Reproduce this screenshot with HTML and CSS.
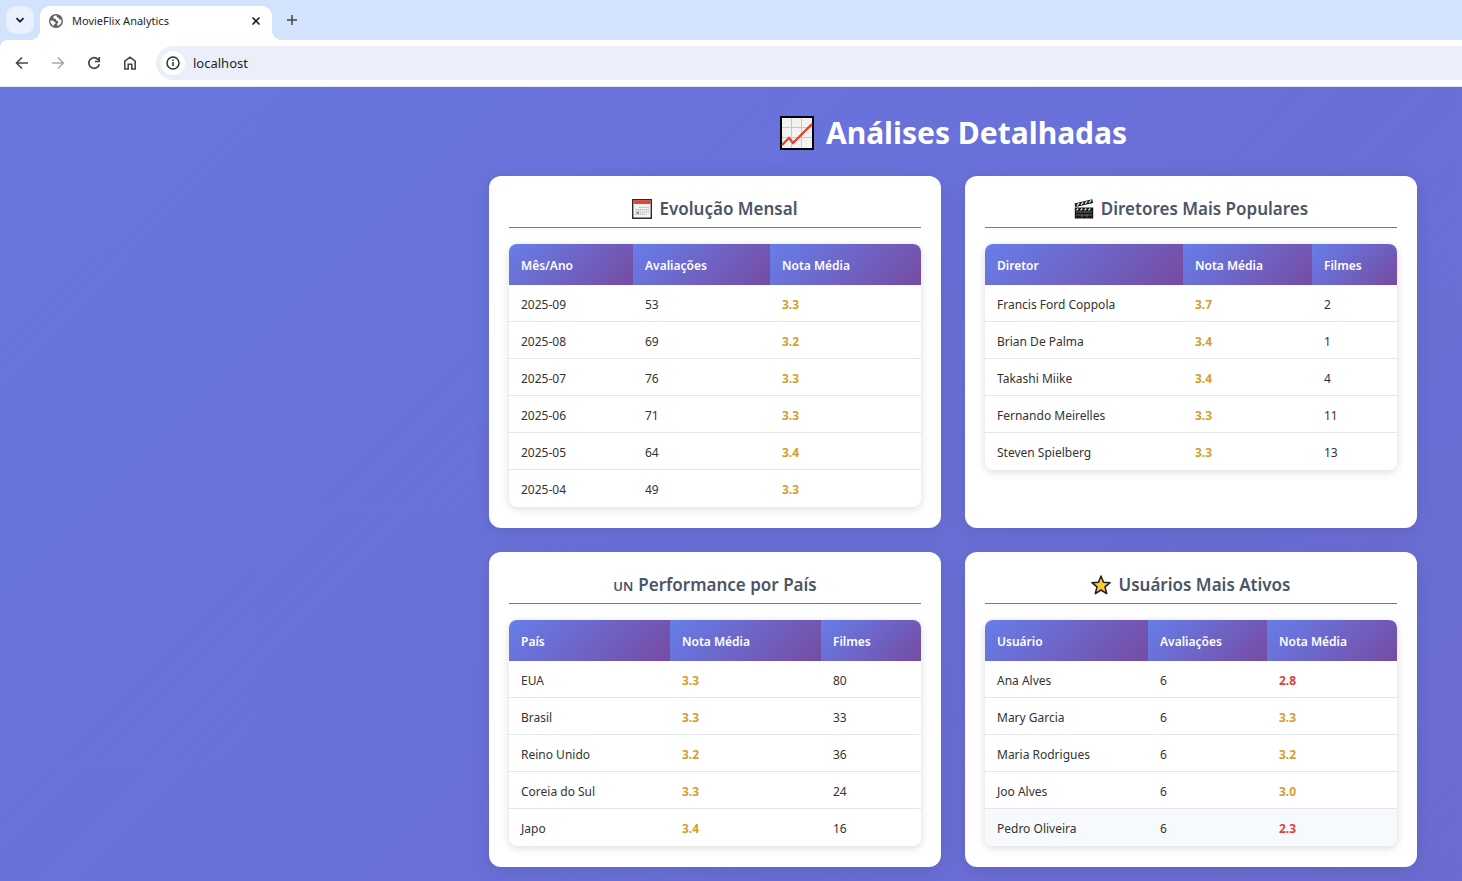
FILE: index.html
```html
<!DOCTYPE html>
<html lang="pt-BR">
<head>
<meta charset="utf-8">
<title>MovieFlix Analytics</title>
<link rel="stylesheet" href="styles.css">
</head>
<body>
<header class="browser">
  <div class="tabstrip">
    <button class="tab-search" aria-label="Pesquisar guias">
      <svg width="10" height="10" viewBox="0 0 10 10"><path d="M1.5 3.2 5 6.7 8.500 3.200" fill="none" stroke="#1f1f1f" stroke-width="1.7"/></svg>
    </button>
    <div class="tab">
      <svg width="16" height="16" viewBox="0 0 16 16"><circle cx="8" cy="8" r="7" fill="#5f6368"/><path d="M8.600 2.600C7 2.400 5.500 3 5.300 4.200c-.2 1.200.8 1.500 1.800 1.500.9.100 1.200.7.900 1.300-.3.500.3 1 1.200.9 1-.1 1.300.4 1.200 1.200-.2.900-1 1-1.100 1.900l-.1 1.900C11.700 12.600 13.500 10.500 13.500 8c0-.7-.1-1.200-.3-1.700-1.100.7-2.200.2-2.300-.8-.1-.9-1.100-.8-1.700-1.300-.5-.4-.8-1-.6-1.600z" fill="#fff"/><path d="M2.300 7.600c1.300-.2 2.800 0 3.800 1 .9.800 1.600.700 1.500 1.600-.1.700-1.400.9-1.700 1.600-.1.400-.1.700 0 1.100C3.700 12.200 2.200 10 2.300 7.600z" fill="#fff"/></svg>
      <span class="tab-title">MovieFlix Analytics</span>
      <button class="tab-close" aria-label="Fechar"><svg width="10" height="10" viewBox="0 0 10 10"><path d="M1.500 1.500l7 7M8.500 1.500l-7 7" stroke="#1f1f1f" stroke-width="1.600"/></svg></button>
    </div>
    <button class="tab-new" aria-label="Nova guia"><svg width="12" height="12" viewBox="0 0 12 12"><path d="M6 1v10M1 6h10" stroke="#474747" stroke-width="1.500"/></svg></button>
  </div>
  <nav class="toolbar">
    <button class="nav" aria-label="Voltar"><svg width="16" height="16" viewBox="0 0 16 16"><path d="M14 8H3M8 2.500 2.500 8 8 13.500" fill="none" stroke="#474747" stroke-width="1.600"/></svg></button>
    <button class="nav" aria-label="Avançar"><svg width="16" height="16" viewBox="0 0 16 16"><path d="M2 8h11M8 2.500 13.500 8 8 13.500" fill="none" stroke="#a9a9a9" stroke-width="1.500"/></svg></button>
    <button class="nav" aria-label="Recarregar"><svg width="16" height="16" viewBox="0 0 16 16"><path d="M13.300 9.200A5.300 5.300 0 1 1 12.200 4.600L13.300 6" fill="none" stroke="#474747" stroke-width="1.700"/><path d="M13.300 2v4.500H8.800" fill="none" stroke="#474747" stroke-width="1.600"/></svg></button>
    <button class="nav" aria-label="Início"><svg width="16" height="16" viewBox="0 0 16 16"><path d="M2.800 6.200 8 2.200l5.200 4V14H9.800V9.200H6.200V14H2.800z" fill="none" stroke="#474747" stroke-width="1.600"/></svg></button>
    <div class="omnibox">
      <button class="info" aria-label="Informações do site"><svg width="16" height="16" viewBox="0 0 16 16"><circle cx="8" cy="8" r="6" fill="none" stroke="#303134" stroke-width="1.500"/><path d="M8 7v4M8 4.600v1.500" stroke="#303134" stroke-width="1.500"/></svg></button>
      <input class="url" type="text" value="localhost" aria-label="Endereço">
    </div>
  </nav>
</header>
<main class="page">
  <div class="content">
    <h1 class="heading">
      <svg class="heading-icon" viewBox="0 0 36 36"><path d="M2 2h32v32H2z" fill="#f2f2f2" stroke="#000" stroke-width="2"/><path d="M12.500 3v30M22.500 3v30M3 12.500h30M3 22.500h30" stroke="#c6c6cc" stroke-width="1"/><path d="M3 30l7-7 4 5L33 9" fill="none" stroke="#e8402a" stroke-width="2.400"/></svg>
      <span>Análises Detalhadas</span>
    </h1>
    <div class="cards">
      <section class="card">
        <h2 class="card-title"><svg class="icon" viewBox="0 0 20 20"><path d="M.7.7h18.600v18.600H.7z" fill="#f4f4f4" stroke="#2b2b2b" stroke-width="1.400"/><path d="M1.400 1.400h17.200V5H1.400z" fill="#e8402a"/><path d="M7 8.500h10M3.500 10.700H17M3.500 13H17M3.500 15.200h11" stroke="#aaa" stroke-width="1.200" stroke-dasharray="1.300 .8"/><path d="M4.500 12.500l2.500 2.500m0-2.500l-2.500 2.500" stroke="#df5146"/></svg><span>Evolução Mensal</span></h2>
        <table class="grid">
          <colgroup><col class="w-124"><col class="w-137"><col></colgroup>
          <thead><tr><th>Mês/Ano</th><th>Avaliações</th><th>Nota Média</th></tr></thead>
          <tbody>
            <tr><td>2025-09</td><td>53</td><td class="mid">3.3</td></tr>
            <tr><td>2025-08</td><td>69</td><td class="mid">3.2</td></tr>
            <tr><td>2025-07</td><td>76</td><td class="mid">3.3</td></tr>
            <tr><td>2025-06</td><td>71</td><td class="mid">3.3</td></tr>
            <tr><td>2025-05</td><td>64</td><td class="mid">3.4</td></tr>
            <tr><td>2025-04</td><td>49</td><td class="mid">3.3</td></tr>
          </tbody>
        </table>
      </section>
      <section class="card">
        <h2 class="card-title"><svg class="icon" viewBox="0 0 20 20"><path d="M.8 8.500h18.400v11H.8z" fill="#161616"/><path d="M.5 4.500 18.300.3l.8 3.600L1.300 8z" fill="#161616"/><path d="M3 6.500l2.200-2.300M7 5.600l2.200-2.300M11 4.600l2.200-2.300M15 3.700l2.200-2.300" stroke="#fff" stroke-width="1.200"/><path d="M2.500 11.300l1.800-1.800M6.500 11.300l1.800-1.800M10.500 11.300l1.800-1.800M14.500 11.300l1.800-1.800" stroke="#fff" stroke-width="1.100"/><path d="M2 13h16M2 16h16M8 16v2.500M13 16v2.500" stroke="#8f8f8f" stroke-width=".7"/></svg><span>Diretores Mais Populares</span></h2>
        <table class="grid">
          <colgroup><col class="w-198"><col class="w-129"><col></colgroup>
          <thead><tr><th>Diretor</th><th>Nota Média</th><th>Filmes</th></tr></thead>
          <tbody>
            <tr><td>Francis Ford Coppola</td><td class="mid">3.7</td><td>2</td></tr>
            <tr><td>Brian De Palma</td><td class="mid">3.4</td><td>1</td></tr>
            <tr><td>Takashi Miike</td><td class="mid">3.4</td><td>4</td></tr>
            <tr><td>Fernando Meirelles</td><td class="mid">3.3</td><td>11</td></tr>
            <tr><td>Steven Spielberg</td><td class="mid">3.3</td><td>13</td></tr>
          </tbody>
        </table>
      </section>
      <section class="card">
        <h2 class="card-title un-title"><span class="un">UN</span><span>Performance por País</span></h2>
        <table class="grid">
          <colgroup><col class="w-161"><col class="w-151"><col></colgroup>
          <thead><tr><th>País</th><th>Nota Média</th><th>Filmes</th></tr></thead>
          <tbody>
            <tr><td>EUA</td><td class="mid">3.3</td><td>80</td></tr>
            <tr><td>Brasil</td><td class="mid">3.3</td><td>33</td></tr>
            <tr><td>Reino Unido</td><td class="mid">3.2</td><td>36</td></tr>
            <tr><td>Coreia do Sul</td><td class="mid">3.3</td><td>24</td></tr>
            <tr><td>Japo</td><td class="mid">3.4</td><td>16</td></tr>
          </tbody>
        </table>
      </section>
      <section class="card">
        <h2 class="card-title"><svg class="icon" viewBox="0 0 20 20"><path d="M10 1l2.500 6.200 6.600.5-5.100 4.200 1.700 6.700L10 15l-5.700 3.600L6 11.900.9 7.700l6.600-.5z" fill="#ffc83d" stroke="#1c1c1c" stroke-width="1.500" stroke-linejoin="round"/></svg><span>Usuários Mais Ativos</span></h2>
        <table class="grid">
          <colgroup><col class="w-163"><col class="w-119"><col></colgroup>
          <thead><tr><th>Usuário</th><th>Avaliações</th><th>Nota Média</th></tr></thead>
          <tbody>
            <tr><td>Ana Alves</td><td>6</td><td class="low">2.8</td></tr>
            <tr><td>Mary Garcia</td><td>6</td><td class="mid">3.3</td></tr>
            <tr><td>Maria Rodrigues</td><td>6</td><td class="mid">3.2</td></tr>
            <tr><td>Joo Alves</td><td>6</td><td class="mid">3.0</td></tr>
            <tr class="active"><td>Pedro Oliveira</td><td>6</td><td class="low">2.3</td></tr>
          </tbody>
        </table>
      </section>
    </div>
  </div>
</main>
</body>
</html>
```
FILE: styles.css
```css
* { box-sizing: border-box; }
html, body { margin: 0; }
body {
  display: flex;
  flex-direction: column;
  min-height: 100vh;
  font-family: "Noto Sans", "Open Sans", sans-serif;
  overflow: hidden;
}
button { border: 0; padding: 0; background: none; display: flex; align-items: center; justify-content: center; }
svg { display: block; flex: none; }

.browser { background: #d3e3fd; }
.tabstrip { display: flex; height: 40px; padding: 6px 0 0 6px; }
.tab-search { width: 28px; height: 28px; border-radius: 10px; background: #e9f0fe; }
.tab {
  position: relative;
  display: flex;
  align-items: center;
  gap: 8px;
  width: 232px;
  margin-left: 6px;
  padding: 0 8px 5px;
  border-radius: 10px 10px 0 0;
  background: #fff;
}
.tab::before, .tab::after {
  content: "";
  position: absolute;
  bottom: 0;
  width: 10px;
  height: 10px;
}
.tab::before { left: -10px; background: radial-gradient(circle at 0 0, transparent 10px, #fff 10px); }
.tab::after { right: -10px; background: radial-gradient(circle at 100% 0, transparent 10px, #fff 10px); }
.tab-title { flex: 1; font-size: 11px; color: #1f1f1f; }
.tab-close { width: 16px; height: 16px; }
.tab-new { width: 28px; height: 28px; margin-left: 6px; }
.toolbar {
  display: flex;
  align-items: center;
  height: 47px;
  padding-left: 8px;
  background: #fff;
  border-bottom: 1px solid #e3e5ea;
  border-top-left-radius: 8px;
}
.nav { width: 28px; height: 28px; margin-right: 8px; }
.omnibox {
  display: flex;
  flex: 1;
  align-items: center;
  gap: 8px;
  height: 34px;
  margin-left: 4px;
  padding-left: 5px;
  border-radius: 17px 0 0 17px;
  background: #ebeff9;
}
.info { width: 24px; height: 24px; border-radius: 50%; background: #fff; }
.url {
  flex: 1;
  border: 0;
  padding: 0;
  outline: 0;
  background: none;
  font: 13px/20px "Noto Sans", "Open Sans", sans-serif;
  color: #1f1f1f;
}

.page {
  flex: 1;
  padding: 24px 45px 14px;
  background: linear-gradient(135deg, #6877de, #6a70d9 50%, #6b6cd2);
}
.content { max-width: 928px; margin-left: auto; }
.heading {
  display: flex;
  align-items: center;
  justify-content: center;
  gap: 11px;
  margin: 0 0 21px;
  font-size: 30px;
  line-height: 44px;
  font-weight: 700;
  color: #fff;
}
.heading-icon { width: 36px; height: 36px; }
.cards { display: grid; grid-template-columns: 1fr 1fr; gap: 24px; }
.card {
  padding: 20px 20px 21px;
  border-radius: 12px;
  background: #fff;
  box-shadow: 0 4px 20px rgba(0, 0, 0, 0.1);
}
.card-title {
  display: flex;
  align-items: center;
  justify-content: center;
  gap: 7px;
  margin: 0 0 16px;
  padding: 1px 0 6px;
  border-bottom: 1px solid #6678bd;
  font-size: 17px;
  line-height: 24px;
  font-weight: 600;
  color: #4a5568;
}
.un-title { align-items: baseline; gap: 5px; }
.un { font-size: 13px; line-height: 16px; }
.icon { width: 20px; height: 20px; }

.grid {
  width: 100%;
  table-layout: fixed;
  border-spacing: 0;
  border-radius: 8px;
  overflow: hidden;
  box-shadow: 0 2px 8px rgba(0, 0, 0, 0.14);
  font-size: 12px;
  color: #333;
}
.w-119 { width: 119px; }
.w-124 { width: 124px; }
.w-129 { width: 129px; }
.w-137 { width: 137px; }
.w-151 { width: 151px; }
.w-161 { width: 161px; }
.w-163 { width: 163px; }
.w-198 { width: 198px; }
th, td { padding: 2px 12px 0; text-align: left; }
th {
  height: 41px;
  background: linear-gradient(135deg, #667eea, #764ba2);
  font-weight: 600;
  color: #fff;
}
td { height: 37px; border-bottom: 1px solid #e2e5ea; }
tr:last-child td { border-bottom-color: transparent; }
.active { background: #f7fafc; }
.mid { font-weight: 700; color: #d69e2e; }
.low { font-weight: 700; color: #e03e3e; }
```
